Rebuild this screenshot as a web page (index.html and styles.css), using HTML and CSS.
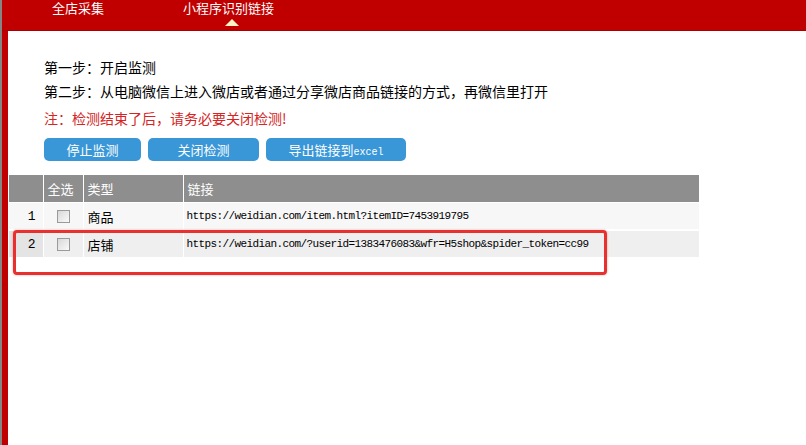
FILE: index.html
```html
<!DOCTYPE html>
<html>
<head>
  <title>小程序识别链接</title>
  <link rel="stylesheet" href="styles.css">
</head>
<body>
  <div class="frame">
    <div class="topnav">
      <span class="nav-item">全店采集</span>
      <span class="nav-item active">小程序识别链接</span>
    </div>
    <div class="main">
      <div class="steps">
        <p>第一步：开启监测</p>
        <p>第二步：从电脑微信上进入微店或者通过分享微店商品链接的方式，再微信里打开</p>
        <p class="notice">注：检测结束了后，请务必要关闭检测!</p>
      </div>
      <div class="actions">
        <button class="btn btn-stop">停止监测</button>
        <button class="btn btn-close">关闭检测</button>
        <button class="btn btn-export">导出链接到<span class="mono">excel</span></button>
      </div>
      <table class="grid">
        <colgroup>
          <col class="col-num">
          <col class="col-check">
          <col class="col-type">
          <col class="col-link">
        </colgroup>
        <thead>
          <tr>
            <th></th>
            <th>全选</th>
            <th>类型</th>
            <th>链接</th>
          </tr>
        </thead>
        <tbody>
          <tr>
            <td class="num">1</td>
            <td class="check"><span class="box"></span></td>
            <td>商品</td>
            <td class="link">https://weidian.com/item.html?itemID=7453919795</td>
          </tr>
          <tr class="current">
            <td class="num">2</td>
            <td class="check"><span class="box"></span></td>
            <td>店铺</td>
            <td class="link">https://weidian.com/?userid=1383476083&amp;wfr=H5shop&amp;spider_token=cc99</td>
          </tr>
        </tbody>
      </table>
      <div class="highlight"></div>
    </div>
  </div>
</body>
</html>
```

FILE: styles.css
```css
html, body {
  margin: 0;
  height: 100%;
  background-color: #fff;
  font-family: "Noto Sans CJK SC", "Liberation Sans", sans-serif;
  font-size: 13px;
  color: #111;
}
.frame {
  height: 100%;
  border-left: 2px solid #858585;
  box-sizing: border-box;
}
.topnav {
  position: relative;
  display: flex;
  gap: 79px;
  height: 30px;
  padding-left: 50px;
  background-color: #c00000;
  border-bottom: 1px solid #a80000;
}
.nav-item {
  position: relative;
  color: #fff;
  font-size: 13px;
  line-height: 15px;
}
.nav-item.active::after {
  content: "";
  position: absolute;
  left: 42px;
  top: 19px;
  border-left: 7px solid transparent;
  border-right: 7px solid transparent;
  border-bottom: 7px solid #fff4c4;
}
.main {
  position: relative;
  height: calc(100% - 31px);
  border-left: 6px solid #c00000;
  padding-top: 24px;
  box-sizing: border-box;
}
.steps {
  padding-left: 36px;
}
.steps p {
  margin: 0;
  font-size: 14px;
  line-height: 24px;
  color: #000;
}
.steps .notice {
  margin-top: 3px;
  color: #d42424;
}
.actions {
  display: flex;
  gap: 7px;
  margin-top: 8px;
  padding-left: 36px;
}
.btn {
  height: 23px;
  padding: 0;
  border: none;
  border-radius: 5px;
  background-color: #3a97d7;
  color: #fff;
  font-family: "Noto Sans CJK SC", sans-serif;
  font-size: 13px;
  line-height: 23px;
  cursor: pointer;
}
.btn-stop {
  width: 97px;
}
.btn-close {
  width: 111px;
}
.btn-export {
  width: 140px;
}
.mono {
  font-family: "Liberation Mono", monospace;
  font-size: 10px;
}
.grid {
  margin-top: 14px;
  margin-left: 1px;
  width: 690px;
  table-layout: fixed;
  border-collapse: collapse;
}
.col-num {
  width: 34px;
}
.col-check {
  width: 40px;
}
.col-type {
  width: 100px;
}
.grid th {
  height: 27px;
  padding: 0 4px;
  background-color: #8e8e8e;
  color: #fff;
  font-weight: normal;
  text-align: left;
  border-left: 1px solid #fff;
}
.grid th:first-child {
  border-left: none;
}
.grid td {
  height: 26px;
  padding: 0 4px;
  background-color: #f7f7f7;
  color: #000;
  border-top: 1px solid #fff;
  border-left: 1px solid #fff;
}
.grid td:first-child {
  border-left: none;
}
.grid .current td {
  background-color: #efefef;
  border-top: 2px solid #fff;
}
.grid .num {
  position: relative;
  text-align: right;
  padding-right: 7px;
  font-family: "Liberation Mono", monospace;
  font-size: 13px;
}
.grid .current .num {
  background-color: #e4e4e4;
}
.grid .current .num::before {
  content: "";
  position: absolute;
  left: 4px;
  top: 10px;
  border-top: 3px solid transparent;
  border-bottom: 3px solid transparent;
  border-left: 3px solid #333;
}
.grid .check {
  text-align: center;
  padding: 0;
}
.box {
  display: inline-block;
  width: 11px;
  height: 11px;
  margin-top: 3px;
  vertical-align: top;
  border: 1px solid #9a9a9a;
  background: linear-gradient(135deg, #d8d8d8, #fafafa);
}
.grid .link {
  padding-left: 3px;
  font-family: "Liberation Mono", monospace;
  font-size: 11px;
  letter-spacing: -0.6px;
  white-space: nowrap;
}
.highlight {
  position: absolute;
  left: 5px;
  top: 199px;
  width: 588px;
  height: 39px;
  border: 3px solid #e8302e;
  border-radius: 4px;
  box-shadow: 0 0 2px rgba(232, 48, 46, 0.5);
}
```
